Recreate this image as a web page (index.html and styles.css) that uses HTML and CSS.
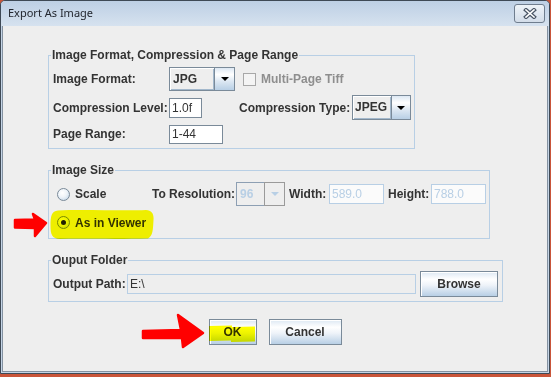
FILE: index.html
```html
<!DOCTYPE html>
<html>
<head>
<meta charset="utf-8">
<title>Export As Image</title>
<link rel="stylesheet" href="styles.css">
</head>
<body>
<div class="window">
  <div class="titlebar">
    <span class="title">Export As Image</span>
    <span class="close">
      <svg width="14" height="11" viewBox="0 0 14 11">
        <path d="M3 2 L11 9 M11 2 L3 9" stroke="#4a5666" stroke-width="4" stroke-linecap="square"/>
        <path d="M3 2 L11 9 M11 2 L3 9" stroke="#ffffff" stroke-width="1.6" stroke-linecap="square"/>
      </svg>
    </span>
  </div>
  <div class="client">
    <fieldset class="group g1">
      <legend>Image Format, Compression &amp; Page Range</legend>
      <div class="row r-24">
        <span class="label w-lab">Image Format:</span>
        <div class="combo w-jpg">
          <span class="combo-val">JPG</span>
          <span class="combo-btn"><svg width="8" height="4" viewBox="0 0 8 4"><polygon points="0,0 8,0 4,4" fill="#000"/></svg></span>
        </div>
        <span class="check disabled">
          <span class="box"></span>
          <span class="check-text">Multi-Page Tiff</span>
        </span>
      </div>
      <div class="row r-25">
        <span class="label w-lab">Compression Level:</span>
        <span class="field w-level">1.0f</span>
        <span class="label w-ctype">Compression Type:</span>
        <div class="combo w-jpeg">
          <span class="combo-val">JPEG</span>
          <span class="combo-btn"><svg width="8" height="4" viewBox="0 0 8 4"><polygon points="0,0 8,0 4,4" fill="#000"/></svg></span>
        </div>
      </div>
      <div class="row r-20">
        <span class="label w-lab">Page Range:</span>
        <span class="field w-range">1-44</span>
      </div>
    </fieldset>

    <fieldset class="group g2">
      <legend>Image Size</legend>
      <div class="row r-24">
        <span class="radio w-scale">
          <span class="dot"></span>
          <span class="radio-text">Scale</span>
        </span>
        <span class="label w-res">To Resolution:</span>
        <div class="combo disabled w-96">
          <span class="combo-val">96</span>
          <span class="combo-btn"><svg width="8" height="4" viewBox="0 0 8 4"><polygon points="0,0 8,0 4,4" fill="#b8cfe5"/></svg></span>
        </div>
        <span class="label gap4 w-width">Width:</span>
        <span class="field disabled w-num">589.0</span>
        <span class="label gap4 w-height">Height:</span>
        <span class="field disabled w-num">788.0</span>
      </div>
      <div class="row r-25 mt4">
        <span class="radio">
          <span class="dot on"></span>
          <span class="radio-text">As in Viewer</span>
        </span>
      </div>
    </fieldset>

    <fieldset class="group g3">
      <legend>Ouput Folder</legend>
      <div class="row r-26">
        <span class="label w-path">Output Path:</span>
        <span class="field readonly w-pathfield">E:\</span>
        <span class="button w-browse">Browse</span>
      </div>
    </fieldset>

    <div class="actions">
      <span class="button w-ok">OK</span>
      <span class="button w-cancel">Cancel</span>
    </div>
  </div>
</div>

<svg class="highlight hl-viewer" width="106" height="32" viewBox="49 209 106 32">
  <path d="M58 210.5 C80 209 120 211 146 210 C152 210.5 154 214 153.5 220 C153 229 153 236 148 238.5 C120 239.5 85 238.5 60 239 C52 239 50.5 234 50.5 226 C50.5 216 51.5 211 58 210.5 Z" fill="#ffff00"/>
</svg>
<svg class="highlight hl-ok" width="50" height="20" viewBox="207 324 50 20">
  <path d="M209 326 L232 325.5 L232 327 L255 326.5 L255 341.5 L231 342 L231 340.5 L209 341 Z" fill="#ffff00"/>
</svg>

<svg class="arrow arrow-viewer" width="40" height="30" viewBox="10 210 40 30">
  <path d="M15 220 L35 219.5 L33 214 L46 223 L35 236 L35 228 L15 227.5 Z" fill="#ff0000" stroke="#ff0000" stroke-width="2.5" stroke-linejoin="round"/>
</svg>
<svg class="arrow arrow-ok" width="70" height="40" viewBox="138 311 70 40">
  <path d="M143 331 L181 330 L178 315 L203 333 L183 347 L182 338 L143 338 Z" fill="#ff0000" stroke="#ff0000" stroke-width="2.5" stroke-linejoin="round"/>
</svg>
</body>
</html>
```

FILE: styles.css
```css
html, body {
  margin: 0;
  padding: 0;
}
body {
  position: relative;
  width: 551px;
  height: 377px;
  overflow: hidden;
  background: #c9553a;
  font-family: "Liberation Sans", Arial, sans-serif;
  font-size: 12px;
  color: #333333;
}

.window {
  box-sizing: border-box;
  width: 550px;
  height: 374px;
  border: 1px solid #3e4955;
  border-radius: 5px 5px 0 0;
  background: #c4d4e6;
  display: flex;
  flex-direction: column;
}

.titlebar {
  height: 25px;
  flex: none;
  display: flex;
  align-items: flex-start;
  justify-content: space-between;
  background: linear-gradient(#bdcfe4, #d6e2ef);
  border-radius: 4px 4px 0 0;
}
.title {
  font-family: "Noto Sans", "Open Sans", sans-serif;
  font-size: 11px;
  color: #22262e;
  margin: 4px 0 0 7px;
  line-height: 16px;
}
.close {
  box-sizing: border-box;
  width: 31px;
  height: 19px;
  margin: 3px 4px 0 0;
  border: 1px solid #6f7d8e;
  border-radius: 3px;
  background: linear-gradient(#eef3f8, #d3dde9);
  display: flex;
  align-items: center;
  justify-content: center;
}

.client {
  flex: 1;
  margin: 0 1px 1px 1px;
  border: 1px solid #8391a0;
  border-top: none;
  background: #eeeeee;
  padding: 22px 0 0 45px;
  display: flex;
  flex-direction: column;
  align-items: flex-start;
}

.group {
  box-sizing: border-box;
  margin: 0;
  border: 1px solid #b8cfe5;
  padding: 4px 3px 4px 4px;
  min-width: 0;
}
.group legend {
  font-weight: bold;
  font-size: 12px;
  line-height: 15px;
  padding: 0 1px;
  margin-left: -2px;
  color: #333333;
}
.g1 { width: 367px; }
.g2 { width: 442px; margin-top: 14px; padding-bottom: 3px; }
.g3 { width: 455px; margin-top: 14px; padding-top: 3px; }

.row {
  display: flex;
  align-items: center;
  white-space: nowrap;
}
.row + .row { margin-top: 4px; }
.r-24 { height: 24px; }
.r-25 { height: 25px; }
.r-20 { height: 20px; }
.r-26 { height: 26px; }

.label {
  font-weight: bold;
  line-height: 14px;
  flex: none;
}
.w-lab { width: 116px; }
.w-ctype { width: 113px; margin-left: 37px; }
.w-res { width: 84px; }
.gap4 { margin-left: 4px; }
.w-width { width: 40px; }
.w-height { width: 43px; }
.w-path { width: 74px; }

.field {
  box-sizing: border-box;
  height: 20px;
  line-height: 18px;
  padding: 0 2px;
  border: 1px solid #7a8a99;
  background: #ffffff;
  flex: none;
}
.field.disabled {
  border-color: #b8cfe5;
  color: #b8cfe5;
  background: #fbfbfb;
}
.field.readonly {
  border-color: #b8cfe5;
  background: #eeeeee;
  color: #333333;
}
.w-level { width: 33px; }
.w-range { width: 54px; height: 19px; line-height: 17px; }
.w-num { width: 55px; }
.w-pathfield { width: 289px; }

.combo {
  display: flex;
  flex: none;
  box-sizing: border-box;
  height: 25px;
}
.combo-val {
  flex: 1;
  box-sizing: border-box;
  border: 1px solid #7a8a99;
  box-shadow: inset 1px 1px 0 #ffffff, inset -1px -1px 0 #a3b8cc;
  background: #eeeeee;
  font-weight: bold;
  line-height: 23px;
  padding-left: 3px;
  overflow: hidden;
}
.combo-btn {
  width: 20px;
  flex: none;
  box-sizing: border-box;
  border: 1px solid #7a8a99;
  border-left: none;
  background: linear-gradient(#dde8f3 0%, #ffffff 30%, #dde8f3 60%, #b8cfe5 100%);
  display: flex;
  align-items: center;
  justify-content: center;
}
.w-jpg { width: 66px; height: 24px; }
.w-jpg .combo-val { line-height: 22px; }
.w-jpeg { width: 59px; }
.w-jpeg .combo-btn { width: 19px; }
.w-jpeg .combo-val { padding-left: 2px; }
.w-96 { width: 49px; height: 24px; }
.combo.disabled .combo-val {
  color: #b8cfe5;
  box-shadow: none;
  border-color: #8d9fb3;
  line-height: 22px;
}
.combo.disabled .combo-btn {
  background: #eeeeee;
  border-color: #9a9a9a;
  border-left: 1px solid #9a9a9a;
  margin-left: -1px;
  width: 21px;
}

.check {
  display: flex;
  align-items: center;
  margin-left: 8px;
  font-weight: bold;
}
.check .box {
  box-sizing: border-box;
  width: 13px;
  height: 13px;
  border: 1px solid #a8a8a8;
  background: #f4f4f4;
  margin-right: 5px;
}
.check.disabled .check-text { color: #8e8e8e; }

.radio {
  display: flex;
  align-items: center;
  margin-left: 4px;
  font-weight: bold;
}
.w-scale { width: 96px; }
.dot {
  box-sizing: border-box;
  width: 13px;
  height: 13px;
  border-radius: 50%;
  border: 1px solid #7a8a99;
  background: radial-gradient(circle at 40% 35%, #ffffff 0%, #eef3f8 45%, #b8cfe5 100%);
  margin-right: 5px;
  display: flex;
  align-items: center;
  justify-content: center;
}
.dot.on::after {
  content: "";
  width: 5px;
  height: 5px;
  border-radius: 50%;
  background: #222222;
}

.button {
  box-sizing: border-box;
  height: 26px;
  border: 1px solid #7a8a99;
  background: linear-gradient(#dde8f3 0%, #ffffff 30%, #eef3f9 55%, #b8cfe5 100%);
  box-shadow: inset 1px 1px 0 #ffffff;
  font-weight: bold;
  display: flex;
  align-items: center;
  justify-content: center;
  flex: none;
}
.w-browse { width: 78px; margin-left: 4px; }
.w-ok { width: 48px; }
.w-cancel { width: 73px; }

.actions {
  align-self: stretch;
  margin: 17px 0 0 -45px;
  display: flex;
  justify-content: center;
  gap: 12px;
}

.highlight {
  position: absolute;
  mix-blend-mode: multiply;
}
.hl-viewer { left: 49px; top: 209px; }
.hl-ok { left: 207px; top: 324px; }

.arrow {
  position: absolute;
}
.arrow-viewer { left: 10px; top: 210px; }
.arrow-ok { left: 138px; top: 311px; }
```
